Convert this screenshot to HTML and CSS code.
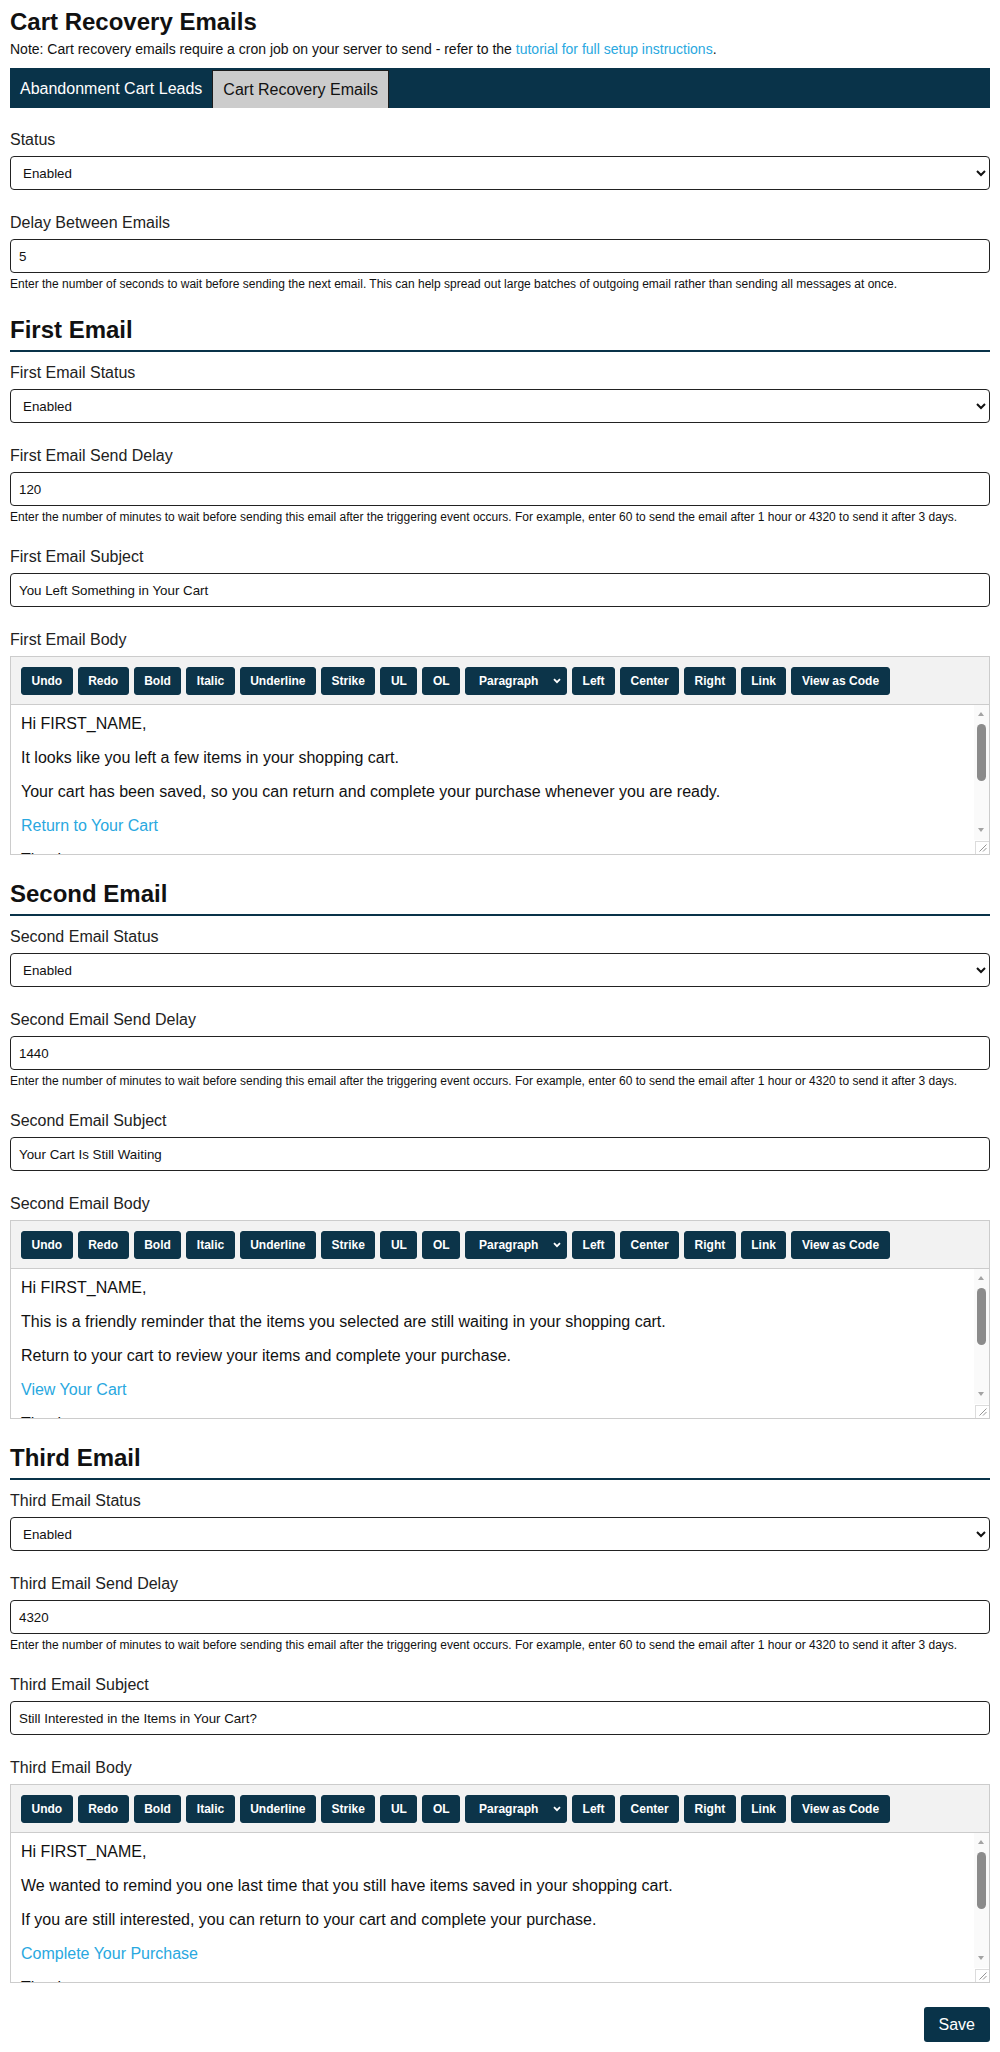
FILE: index.html
```html
<!DOCTYPE html>
<html lang="en">
<head>
    <meta charset="UTF-8">
    <meta name="viewport" content="width=device-width, initial-scale=1.0">
    <title>Cart Recovery Emails</title>
    <link rel="stylesheet" href="styles.css">
</head>
<body>

    <!-- Page title -->
    <h1 class="page-title">Cart Recovery Emails</h1>
    <p class="note">Note: Cart recovery emails require a cron job on your server to send - refer to the <a href="#">tutorial for full setup instructions</a>.</p>

    <!-- Tabs -->
    <nav class="tabs">
        <a href="#" class="tab">Abandonment Cart Leads</a>
        <a href="#" class="tab active">Cart Recovery Emails</a>
    </nav>

    <form class="settings" onsubmit="return false">

        <!-- General -->
        <div class="field">
            <label for="status">Status</label>
            <select id="status" class="input">
                <option>Enabled</option>
                <option>Disabled</option>
            </select>
        </div>

        <div class="field">
            <label for="delay">Delay Between Emails</label>
            <input type="text" id="delay" class="input" value="5">
            <p class="help">Enter the number of seconds to wait before sending the next email. This can help spread out large batches of outgoing email rather than sending all messages at once.</p>
        </div>

        <!-- First email -->
        <h2 class="section-title">First Email</h2>

        <div class="field">
            <label for="firstStatus">First Email Status</label>
            <select id="firstStatus" class="input">
                <option>Enabled</option>
                <option>Disabled</option>
            </select>
        </div>

        <div class="field">
            <label for="firstDelay">First Email Send Delay</label>
            <input type="text" id="firstDelay" class="input" value="120">
            <p class="help">Enter the number of minutes to wait before sending this email after the triggering event occurs. For example, enter 60 to send the email after 1 hour or 4320 to send it after 3 days.</p>
        </div>

        <div class="field">
            <label for="firstSubject">First Email Subject</label>
            <input type="text" id="firstSubject" class="input" value="You Left Something in Your Cart">
        </div>

        <div class="field">
            <label>First Email Body</label>
            <div class="editor">
                <div class="toolbar">
                    <button class="tool">Undo</button>
                    <button class="tool">Redo</button>
                    <button class="tool">Bold</button>
                    <button class="tool">Italic</button>
                    <button class="tool">Underline</button>
                    <button class="tool">Strike</button>
                    <button class="tool">UL</button>
                    <button class="tool">OL</button>
                    <span class="format-wrap">
                        <select class="format-select">
                            <option>Paragraph</option>
                            <option>Heading 1</option>
                            <option>Heading 2</option>
                        </select>
                        <svg class="chevron" width="8" height="6" viewBox="0 0 8 6"><path d="M1 1.2 L4 4.2 L7 1.2" fill="none" stroke="#fff" stroke-width="1.8"/></svg>
                    </span>
                    <button class="tool">Left</button>
                    <button class="tool">Center</button>
                    <button class="tool">Right</button>
                    <button class="tool">Link</button>
                    <button class="tool">View as Code</button>
                </div>
                <div class="editor-body">
                    <div class="editor-content" contenteditable="true">
                        <p>Hi FIRST_NAME,</p>
                        <p>It looks like you left a few items in your shopping cart.</p>
                        <p>Your cart has been saved, so you can return and complete your purchase whenever you are ready.</p>
                        <p><a href="#">Return to Your Cart</a></p>
                        <p>Thanks,</p>
                        <p>STORE_NAME</p>
                        <p>If you have any questions, just reply to this email.</p>
                        <p>UNSUBSCRIBE_LINK</p>
                    </div>
                    <div class="scrollbar">
                        <span class="arrow-up"></span>
                        <span class="thumb"></span>
                        <span class="arrow-down"></span>
                    </div>
                    <span class="grip"><svg width="8" height="8" viewBox="0 0 8 8"><path d="M7.5 0.5 L0.5 7.5 M7.5 4 L4 7.5" stroke="#888" stroke-width="0.9"/></svg></span>
                </div>
            </div>
        </div>

        <!-- Second email -->
        <h2 class="section-title">Second Email</h2>

        <div class="field">
            <label for="secondStatus">Second Email Status</label>
            <select id="secondStatus" class="input">
                <option>Enabled</option>
                <option>Disabled</option>
            </select>
        </div>

        <div class="field">
            <label for="secondDelay">Second Email Send Delay</label>
            <input type="text" id="secondDelay" class="input" value="1440">
            <p class="help">Enter the number of minutes to wait before sending this email after the triggering event occurs. For example, enter 60 to send the email after 1 hour or 4320 to send it after 3 days.</p>
        </div>

        <div class="field">
            <label for="secondSubject">Second Email Subject</label>
            <input type="text" id="secondSubject" class="input" value="Your Cart Is Still Waiting">
        </div>

        <div class="field">
            <label>Second Email Body</label>
            <div class="editor">
                <div class="toolbar">
                    <button class="tool">Undo</button>
                    <button class="tool">Redo</button>
                    <button class="tool">Bold</button>
                    <button class="tool">Italic</button>
                    <button class="tool">Underline</button>
                    <button class="tool">Strike</button>
                    <button class="tool">UL</button>
                    <button class="tool">OL</button>
                    <span class="format-wrap">
                        <select class="format-select">
                            <option>Paragraph</option>
                            <option>Heading 1</option>
                            <option>Heading 2</option>
                        </select>
                        <svg class="chevron" width="8" height="6" viewBox="0 0 8 6"><path d="M1 1.2 L4 4.2 L7 1.2" fill="none" stroke="#fff" stroke-width="1.8"/></svg>
                    </span>
                    <button class="tool">Left</button>
                    <button class="tool">Center</button>
                    <button class="tool">Right</button>
                    <button class="tool">Link</button>
                    <button class="tool">View as Code</button>
                </div>
                <div class="editor-body">
                    <div class="editor-content" contenteditable="true">
                        <p>Hi FIRST_NAME,</p>
                        <p>This is a friendly reminder that the items you selected are still waiting in your shopping cart.</p>
                        <p>Return to your cart to review your items and complete your purchase.</p>
                        <p><a href="#">View Your Cart</a></p>
                        <p>Thanks,</p>
                        <p>STORE_NAME</p>
                        <p>If you have any questions, just reply to this email.</p>
                        <p>UNSUBSCRIBE_LINK</p>
                    </div>
                    <div class="scrollbar">
                        <span class="arrow-up"></span>
                        <span class="thumb"></span>
                        <span class="arrow-down"></span>
                    </div>
                    <span class="grip"><svg width="8" height="8" viewBox="0 0 8 8"><path d="M7.5 0.5 L0.5 7.5 M7.5 4 L4 7.5" stroke="#888" stroke-width="0.9"/></svg></span>
                </div>
            </div>
        </div>

        <!-- Third email -->
        <h2 class="section-title">Third Email</h2>

        <div class="field">
            <label for="thirdStatus">Third Email Status</label>
            <select id="thirdStatus" class="input">
                <option>Enabled</option>
                <option>Disabled</option>
            </select>
        </div>

        <div class="field">
            <label for="thirdDelay">Third Email Send Delay</label>
            <input type="text" id="thirdDelay" class="input" value="4320">
            <p class="help">Enter the number of minutes to wait before sending this email after the triggering event occurs. For example, enter 60 to send the email after 1 hour or 4320 to send it after 3 days.</p>
        </div>

        <div class="field">
            <label for="thirdSubject">Third Email Subject</label>
            <input type="text" id="thirdSubject" class="input" value="Still Interested in the Items in Your Cart?">
        </div>

        <div class="field">
            <label>Third Email Body</label>
            <div class="editor">
                <div class="toolbar">
                    <button class="tool">Undo</button>
                    <button class="tool">Redo</button>
                    <button class="tool">Bold</button>
                    <button class="tool">Italic</button>
                    <button class="tool">Underline</button>
                    <button class="tool">Strike</button>
                    <button class="tool">UL</button>
                    <button class="tool">OL</button>
                    <span class="format-wrap">
                        <select class="format-select">
                            <option>Paragraph</option>
                            <option>Heading 1</option>
                            <option>Heading 2</option>
                        </select>
                        <svg class="chevron" width="8" height="6" viewBox="0 0 8 6"><path d="M1 1.2 L4 4.2 L7 1.2" fill="none" stroke="#fff" stroke-width="1.8"/></svg>
                    </span>
                    <button class="tool">Left</button>
                    <button class="tool">Center</button>
                    <button class="tool">Right</button>
                    <button class="tool">Link</button>
                    <button class="tool">View as Code</button>
                </div>
                <div class="editor-body">
                    <div class="editor-content" contenteditable="true">
                        <p>Hi FIRST_NAME,</p>
                        <p>We wanted to remind you one last time that you still have items saved in your shopping cart.</p>
                        <p>If you are still interested, you can return to your cart and complete your purchase.</p>
                        <p><a href="#">Complete Your Purchase</a></p>
                        <p>Thanks,</p>
                        <p>STORE_NAME</p>
                        <p>If you have any questions, just reply to this email.</p>
                        <p>UNSUBSCRIBE_LINK</p>
                    </div>
                    <div class="scrollbar">
                        <span class="arrow-up"></span>
                        <span class="thumb"></span>
                        <span class="arrow-down"></span>
                    </div>
                    <span class="grip"><svg width="8" height="8" viewBox="0 0 8 8"><path d="M7.5 0.5 L0.5 7.5 M7.5 4 L4 7.5" stroke="#888" stroke-width="0.9"/></svg></span>
                </div>
            </div>
        </div>

        <div class="actions">
            <button type="submit" class="save">Save</button>
        </div>
    </form>

</body>
</html>
```

FILE: styles.css
```css
body {
    font-family: "Liberation Sans", Arial, sans-serif;
    color: #111;
    background-color: #fff;
    margin: 0;
    padding: 8px 10px 0;
}

a {
    color: #29a8e0;
    text-decoration: none;
}

.page-title {
    font-size: 24px;
    line-height: 28px;
    font-weight: bold;
    margin: 0;
}

.note {
    font-size: 14px;
    line-height: 16px;
    margin: 5px 0 11px;
}

/* Tabs */
.tabs {
    display: flex;
    height: 40px;
    padding-top: 2px;
    box-sizing: border-box;
    background-color: #093349;
}

.tab {
    padding: 0 10px;
    line-height: 38px;
    font-size: 16px;
    color: #fff;
}

.tab.active {
    background-color: #ccc;
    color: #111;
    border: 1px solid #1c1c1c;
    border-bottom: none;
    line-height: 37px;
}

/* Form */
.settings {
    padding-top: 23px;
}

.field {
    margin-bottom: 24px;
}

.field label {
    display: block;
    font-size: 16px;
    line-height: 18px;
    margin-bottom: 7px;
    color: #222;
}

.input {
    display: block;
    width: 100%;
    box-sizing: border-box;
    height: 34px;
    padding: 8px 8px;
    font-family: "Liberation Sans", Arial, sans-serif;
    font-size: 13.33px;
    line-height: 16px;
    color: #111;
    background-color: #fff;
    border: 1px solid #222;
    border-radius: 4px;
}

select.input {
    padding: 6px 6px 6px 8px;
}

.help {
    font-size: 12px;
    line-height: 13px;
    margin: 5px 0 0;
    color: #111;
}

.section-title {
    font-size: 24px;
    line-height: 28px;
    font-weight: bold;
    margin: 25px 0 12px;
    padding-bottom: 6px;
    border-bottom: 2px solid #093349;
}

/* Editor */
.editor {
    border: 1px solid #ccc;
}

.toolbar {
    display: flex;
    flex-wrap: wrap;
    gap: 5px;
    padding: 10px 10px 9px;
    background-color: #f2f2f2;
    border-bottom: 1px solid #ccc;
}

.tool {
    font-family: "Liberation Sans", Arial, sans-serif;
    font-size: 12px;
    font-weight: bold;
    line-height: 14px;
    padding: 6px 9.5px;
    color: #fff;
    background-color: #0c3449;
    border: 1px solid #0c3449;
    border-radius: 3px;
    cursor: pointer;
}

.format-wrap {
    position: relative;
    display: flex;
}

.format-select {
    appearance: none;
    -webkit-appearance: none;
    font-family: "Liberation Sans", Arial, sans-serif;
    font-size: 12px;
    font-weight: bold;
    line-height: 14px;
    height: 28px;
    width: 102px;
    padding: 6px 20px 6px 13px;
    color: #fff;
    background-color: #0c3449;
    border: 1px solid #0c3449;
    border-radius: 3px;
}

.chevron {
    position: absolute;
    right: 6px;
    top: 11px;
    pointer-events: none;
}

.editor-body {
    position: relative;
    height: 149px;
}

.editor-content {
    height: 100%;
    box-sizing: border-box;
    overflow: hidden;
    padding: 10px 25px 10px 10px;
    font-size: 16px;
    line-height: 18px;
    outline: none;
}

.editor-content p {
    margin: 16px 0;
}

.editor-content p:first-child {
    margin-top: 0;
}

/* drawn scrollbar over the content box */
.scrollbar {
    position: absolute;
    top: 0;
    right: 0;
    bottom: 14px;
    width: 15px;
    background-color: #fafafa;
}

.arrow-up,
.arrow-down {
    position: absolute;
    left: 4px;
    width: 0;
    height: 0;
    border-left: 3.5px solid transparent;
    border-right: 3.5px solid transparent;
}

.arrow-up {
    top: 7px;
    border-bottom: 4px solid #a3a3a3;
}

.arrow-down {
    bottom: 8px;
    border-top: 4px solid #a3a3a3;
}

.thumb {
    position: absolute;
    top: 19px;
    left: 3px;
    width: 9px;
    height: 57px;
    border-radius: 5px;
    background-color: #8b8b8b;
}

.grip {
    position: absolute;
    right: 0;
    bottom: 0;
    width: 14px;
    height: 13px;
    background-color: #fff;
    border-top: 1px solid #dcdcdc;
    border-left: 1px solid #dcdcdc;
    display: flex;
    align-items: flex-end;
    justify-content: flex-end;
    padding: 0 2px 2px 0;
    box-sizing: border-box;
}

.grip svg {
    display: block;
}

/* Save */
.actions {
    display: flex;
    justify-content: flex-end;
}

.save {
    font-family: "Liberation Sans", Arial, sans-serif;
    font-size: 16px;
    line-height: 19px;
    padding: 8px 15px;
    color: #fff;
    background-color: #093349;
    border: none;
    border-radius: 3px;
    cursor: pointer;
}
```
